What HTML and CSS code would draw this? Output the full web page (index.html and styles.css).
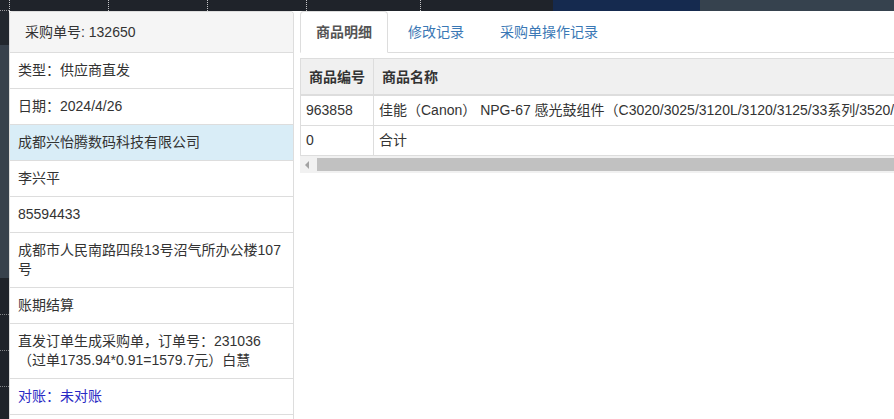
FILE: index.html
```html
<!DOCTYPE html>
<html lang="zh-CN">
<head>
<meta charset="utf-8">
<title>采购单详情</title>
<link rel="stylesheet" href="styles.css">
</head>
<body>
<div class="topbar">
  <div class="seg seg-a"></div>
  <div class="seg seg-b dot"></div>
  <div class="seg seg-c dot"></div>
  <div class="seg seg-d dot"></div>
  <div class="seg seg-e dot"></div>
  <div class="seg seg-f dot"></div>
  <div class="seg seg-navy"></div>
  <div class="seg seg-gray"></div>
</div>
<div class="main">
  <div class="strip">
    <div class="strip-top"></div>
    <div class="strip-mid"></div>
    <div class="strip-bot">
      <div class="strip-line first"></div>
      <div class="strip-line"></div>
      <div class="strip-line"></div>
    </div>
  </div>
  <div class="modal">
    <div class="panel">
      <div class="panel-heading">采购单号: 132650</div>
      <ul class="list">
        <li class="item">类型：供应商直发</li>
        <li class="item">日期：2024/4/26</li>
        <li class="item item-info">成都兴怡腾数码科技有限公司</li>
        <li class="item">李兴平</li>
        <li class="item">85594433</li>
        <li class="item">成都市人民南路四段13号沼气所办公楼107号</li>
        <li class="item">账期结算</li>
        <li class="item">直发订单生成采购单，订单号：231036（过单1735.94*0.91=1579.7元）白慧</li>
        <li class="item item-link">对账：未对账</li>
        <li class="item">&nbsp;</li>
      </ul>
    </div>
    <div class="content">
      <ul class="tabs">
        <li class="tab active">商品明细</li>
        <li class="tab">修改记录</li>
        <li class="tab">采购单操作记录</li>
      </ul>
      <div class="table-wrap">
        <table class="grid">
          <thead>
            <tr><th class="col-code">商品编号</th><th>商品名称</th></tr>
          </thead>
          <tbody>
            <tr><td>963858</td><td>佳能（Canon） NPG-67 感光鼓组件（C3020/3025/3120L/3120/3125/33系列/3520/3525/3530/3630系列）</td></tr>
            <tr><td>0</td><td>合计</td></tr>
          </tbody>
        </table>
      </div>
      <div class="hscroll">
        <span class="arrow"></span>
        <span class="thumb"></span>
      </div>
    </div>
  </div>
</div>
</body>
</html>
```
FILE: styles.css
```css
* { box-sizing: border-box; }
html, body { margin: 0; padding: 0; }
body {
  width: 894px;
  height: 419px;
  overflow: hidden;
  background: #1f232a;
  font-family: "Liberation Sans", "Noto Sans CJK SC", sans-serif;
  font-size: 14px;
  line-height: 20px;
  color: #333;
}

/* background page fragments */
.topbar { display: flex; height: 11px; }
.seg { height: 11px; background: #1f232a; }
.dot { border-left: 1px dotted rgba(255,255,255,0.75); }
.seg-a { width: 9px; border-bottom: 1px dotted rgba(255,255,255,0.55); }
.seg-b { width: 99px; }
.seg-c { width: 99px; }
.seg-d { width: 99px; }
.seg-e { width: 114px; }
.seg-f { width: 133px; }
.seg-navy { width: 147px; background: #152a4f; }
.seg-gray { flex: 1; background: #36424e; }

.main { display: flex; height: 408px; }
.strip { width: 9px; flex: none; display: flex; flex-direction: column; }
.strip-top { height: 34px; background: #22272e; }
.strip-mid { height: 233px; background: #37414c; }
.strip-bot { flex: 1; background: #1f232a; }
.strip-line { height: 36px; border-bottom: 1px dotted rgba(255,255,255,0.45); }
.strip-line.first { height: 37px; }

.modal {
  flex: 1;
  min-width: 0;
  background: #fff;
  display: flex;
  gap: 6px;
  overflow: hidden;
}

/* left info panel */
.panel {
  width: 285px;
  flex: none;
  border: 1px solid #ddd;
  border-bottom: 0;
  border-radius: 4px 4px 0 0;
  overflow: hidden;
}
.panel-heading {
  background: #f5f5f5;
  padding: 10px 15px;
  border-bottom: 1px solid #ddd;
  color: #333;
}
.list { list-style: none; margin: 0; padding: 0; }
.item {
  padding: 8px 8px;
  line-height: 19px;
  border-bottom: 1px solid #ddd;
}
.item-info { background: #d9edf7; }
.item-link { color: #2a2ac4; }

/* right content */
.content { flex: 1; min-width: 0; overflow: hidden; }
.tabs {
  list-style: none;
  margin: 0;
  padding: 0;
  display: flex;
  border-bottom: 1px solid #ddd;
}
.tab {
  padding: 10px 15px;
  margin-right: 4px;
  margin-bottom: -1px;
  border: 1px solid transparent;
  border-radius: 4px 4px 0 0;
  color: #3a78b5;
  white-space: nowrap;
}
.tab.active {
  color: #555;
  font-weight: bold;
  background: #fff;
  border-color: #ddd #ddd transparent;
}

.table-wrap { margin-top: 5px; overflow: hidden; }
.grid {
  border-collapse: collapse;
  border: 1px solid #ddd;
  border-right: 0;
  width: 1100px;
}
.grid th {
  background: #f0f0f0;
  text-align: left;
  font-weight: bold;
  padding: 8px 8px 7px;
  border-bottom: 2px solid #ddd;
  border-left: 1px solid #ddd;
  white-space: nowrap;
  color: #333;
}
.grid th.col-code { width: 73px; }
.grid td {
  padding: 4px 6px 5px 5px;
  border-top: 1px solid #ddd;
  border-left: 1px solid #ddd;
  white-space: nowrap;
}

.hscroll {
  position: relative;
  height: 17px;
  background: #f1f1f1;
}
.arrow {
  position: absolute;
  left: 5px;
  top: 5px;
  width: 0;
  height: 0;
  border-top: 4px solid transparent;
  border-bottom: 4px solid transparent;
  border-right: 4px solid #a3a3a3;
}
.thumb {
  position: absolute;
  left: 17px;
  right: -40px;
  top: 2px;
  height: 13px;
  background: #c1c1c1;
}
```
